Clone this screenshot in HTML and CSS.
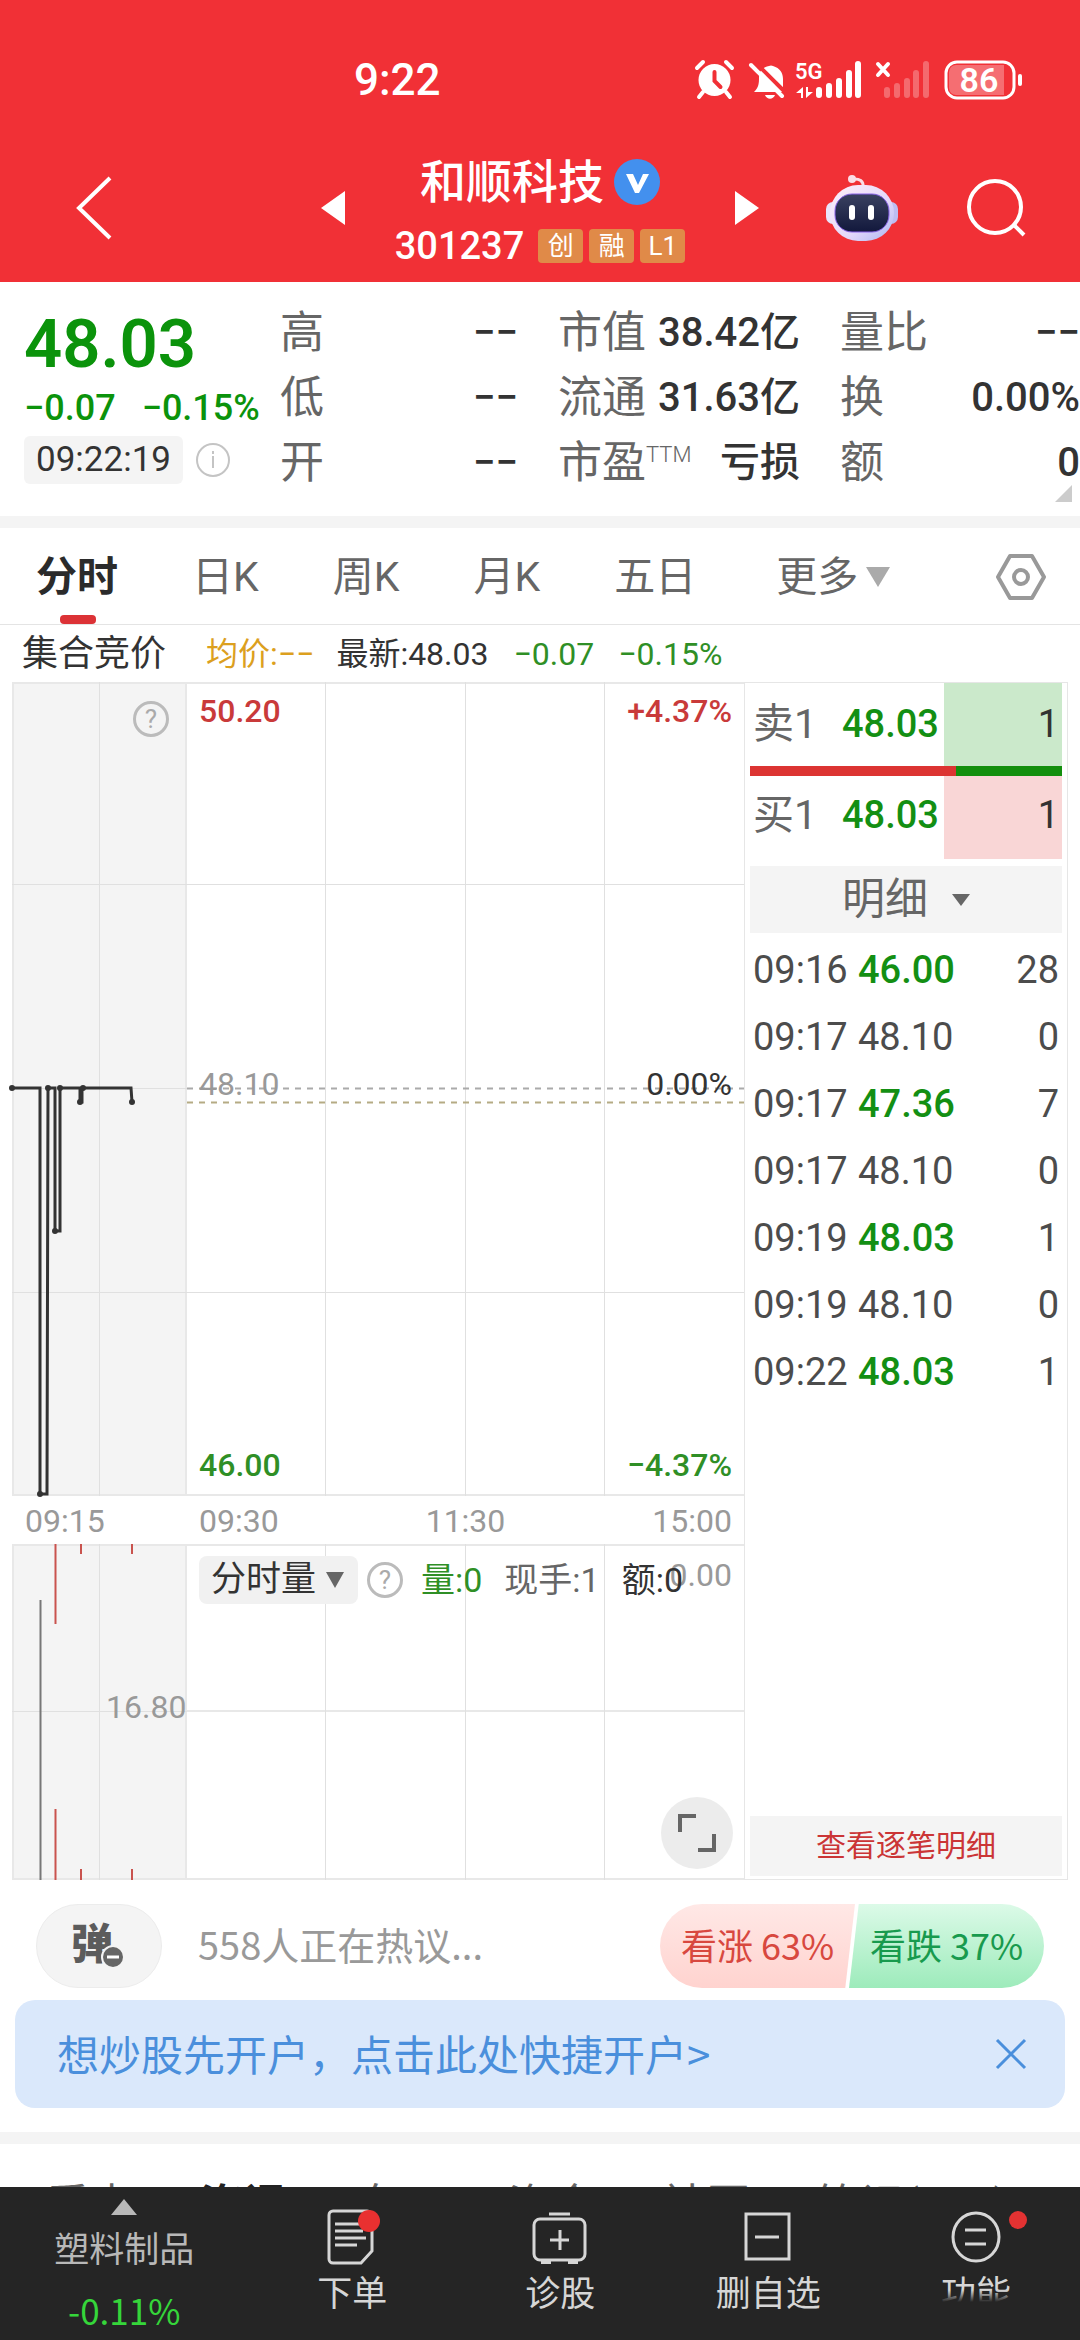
FILE: index.html
```html
<!DOCTYPE html>
<html lang="zh-CN">
<head>
<meta charset="utf-8">
<meta name="viewport" content="width=device-width, initial-scale=1">
<title>和顺科技 301237</title>
<link rel="stylesheet" href="styles.css">
</head>
<body>
<div class="app">
  <header class="top">
    <div class="status">
      <span class="clock">9:22</span>
      <svg class="status-icons" width="328" height="44" viewBox="0 0 328 44" aria-hidden="true">
        <g stroke="#fff" stroke-width="4" stroke-linecap="round" fill="none">
          <path d="M3 10l6-6M38 10l-6-6M9 34l-4 5M32 34l4 5"/>
          <circle cx="20.500" cy="22" r="16" fill="#fff" stroke="none"/>
          <path d="M20.500 14v9l6 6" stroke="#f13036"/>
        </g>
        <path d="M60 34c5-5 5-9 5-15 0-6 4-10 10-11a4 4 0 0 1 4 0c7 2 10 7 10 13v9l3 4z" fill="#fff"/>
        <path d="M71 37h10c-2 5-8 5-10 0z" fill="#fff"/>
        <path d="M60 3l32 32" stroke="#f13036" stroke-width="4"/>
        <path d="M57 7l31 31" stroke="#fff" stroke-width="4" stroke-linecap="round"/>
        <path d="M109 40V29l-7 6h5v5zM112 29v11l7-6h-5v-5z" fill="#fff"/>
        <g stroke="#fff" stroke-width="6" stroke-linecap="round">
          <path d="M125 32v5M135 28v9M145 23v14M155 15v22M164 6v31"/>
          <path d="M193 32v5M203 28v9M213 23v14M222 15v22M232 6v31" opacity=".28"/>
          <path d="M184 6l10 11M194 6l-10 11" stroke-width="4"/>
        </g>
        <rect x="252" y="4" width="68" height="36" rx="11" fill="none" stroke="#fff" stroke-width="3"/>
        <path d="M262 7h48v30h-48a7 7 0 0 1-7-7V14a7 7 0 0 1 7-7z" fill="#fff" opacity=".3"/>
        <rect x="324" y="16" width="4" height="12" rx="2" fill="#fff"/>
        <text class="net" x="101" y="21">5G</text>
        <text class="charge" x="285" y="34" text-anchor="middle">86</text>
      </svg>
    </div>
    <div class="titlebar">
      <button class="icon-btn back" aria-label="返回"><svg width="40" height="68" viewBox="0 0 40 68"><path d="M36 4L5 34l31 30" fill="none" stroke="#fff" stroke-width="4"/></svg></button>
      <button class="icon-btn" aria-label="上一只"><svg width="24" height="36" viewBox="0 0 24 36"><path d="M24 1v34L0 18z" fill="#fff"/></svg></button>
      <div class="stock">
        <h1 class="name">和顺科技 <svg width="46" height="46" viewBox="0 0 46 46" aria-hidden="true"><circle cx="23" cy="23" r="23" fill="#4390ee"/><path d="M12 15h7l5 11 5-11h6L25 34h-4z" fill="#fff"/></svg></h1>
        <p class="code">301237 <span class="tag">创</span><span class="tag">融</span><span class="tag">L1</span></p>
      </div>
      <button class="icon-btn" aria-label="下一只"><svg width="24" height="36" viewBox="0 0 24 36"><path d="M0 1v34l24-17z" fill="#fff"/></svg></button>
      <button class="icon-btn robot" aria-label="智能助手">
        <svg width="74" height="70" viewBox="0 0 74 70">
          <defs>
            <linearGradient id="shell" x1="0" y1="0" x2="1" y2="1"><stop offset="0" stop-color="#fff0fa"/><stop offset=".6" stop-color="#e4d8fa"/><stop offset="1" stop-color="#a9b6f2"/></linearGradient>
            <linearGradient id="face" x1="0" y1="0" x2="0" y2="1"><stop offset="0" stop-color="#3a4160"/><stop offset="1" stop-color="#12183c"/></linearGradient>
          </defs>
          <path d="M27 6q12-1 11 8" fill="none" stroke="#fbdde6" stroke-width="3"/>
          <circle cx="27" cy="6" r="4" fill="#fbdde6"/>
          <rect x="1" y="29" width="14" height="22" rx="7" fill="#e9e4fb"/>
          <rect x="59" y="29" width="14" height="22" rx="7" fill="#bdbdf2"/>
          <rect x="5" y="12" width="64" height="56" rx="28" fill="url(#shell)"/>
          <rect x="10" y="21" width="54" height="38" rx="17" fill="url(#face)" stroke="#8a63e8" stroke-width="1"/>
          <rect x="24" y="32" width="6" height="15" rx="3" fill="#fff"/>
          <rect x="43" y="32" width="6" height="15" rx="3" fill="#fff"/>
        </svg>
      </button>
      <button class="icon-btn" aria-label="搜索"><svg width="60" height="60" viewBox="0 0 60 60"><circle cx="29" cy="29" r="26" fill="none" stroke="#fff" stroke-width="4"/><path d="M48 47l10 10" stroke="#fff" stroke-width="4"/></svg></button>
    </div>
  </header>

  <main class="content">
    <section class="quote">
      <div class="last">
        <strong class="price">48.03</strong>
        <p class="change"><span>−0.07</span><span>−0.15%</span></p>
        <p class="when"><time>09:22:19</time><svg width="36" height="36" viewBox="0 0 36 36" aria-hidden="true"><circle cx="18" cy="18" r="16" fill="none" stroke="#c4c4c4" stroke-width="2"/><path d="M18 14v12M18 9v3" stroke="#c4c4c4" stroke-width="2"/></svg></p>
      </div>
      <dl class="stats">
        <div><dt>高</dt><dd>−−</dd></div>
        <div><dt>市值</dt><dd>38.42亿</dd></div>
        <div><dt>量比</dt><dd>−−</dd></div>
        <div><dt>低</dt><dd>−−</dd></div>
        <div><dt>流通</dt><dd>31.63亿</dd></div>
        <div><dt>换</dt><dd>0.00%</dd></div>
        <div><dt>开</dt><dd>−−</dd></div>
        <div><dt>市盈<sup>TTM</sup></dt><dd>亏损</dd></div>
        <div><dt>额</dt><dd>0</dd></div>
      </dl>
      <svg class="corner" width="17" height="17" viewBox="0 0 17 17" aria-hidden="true"><path d="M17 0v17H0z" fill="#ccc"/></svg>
    </section>

    <nav class="periods">
      <button class="period on">分时</button>
      <button class="period">日K</button>
      <button class="period">周K</button>
      <button class="period">月K</button>
      <button class="period">五日</button>
      <button class="period">更多<svg width="24" height="20" viewBox="0 0 24 20" aria-hidden="true"><path d="M0 0h24L12 20z" fill="#aaa"/></svg></button>
      <button class="icon-btn settings" aria-label="设置"><svg width="50" height="48" viewBox="0 0 50 48"><path d="M14 3h22l12 21-12 21H14L2 24z" fill="none" stroke="#999" stroke-width="4" stroke-linejoin="round"/><circle cx="25" cy="24" r="7" fill="none" stroke="#999" stroke-width="4"/></svg></button>
    </nav>

    <p class="ticker"><span class="auction">集合竞价</span><span class="avg">均价:−−</span><span class="now">最新:48.03</span><span class="down">−0.07</span><span class="down">−0.15%</span></p>

    <section class="board">
      <div class="charts">
        <div class="plot price-plot">
          <svg class="canvas" viewBox="0 0 732 814" preserveAspectRatio="none" aria-hidden="true">
            <rect width="175" height="814" fill="#f4f4f4"/>
            <path d="M0 1h732M0 813h732M1 0v814M174 0v814" stroke="#e8e8e8" stroke-width="2" fill="none"/>
            <path d="M0 202.500h732M0 406.500h175M0 610.500h732M87.500 0v814M313.500 0v814M453.500 0v814M592.500 0v814" stroke="#e0e0e0" stroke-width="1"/>
            <path d="M175 406.500h557" stroke="#aaa" stroke-width="2" stroke-dasharray="6 6"/>
            <path d="M175 420.500h557" stroke="#b5ab84" stroke-width="2" stroke-dasharray="6 6"/>
          </svg>
          <svg class="canvas line" viewBox="0 0 732 814" preserveAspectRatio="none" aria-hidden="true">
            <path d="M0 406h28v406h7L36 406h7v143h5V406h20v14h2V406h49l1 14" fill="none" stroke="#333" stroke-width="3"/>
            <g fill="#333"><circle cx="0" cy="406" r="3"/><circle cx="36" cy="406" r="3"/><circle cx="48" cy="406" r="3"/><circle cx="71" cy="406" r="3"/><circle cx="28" cy="812" r="3"/><circle cx="43" cy="549" r="3"/><circle cx="68" cy="420" r="3"/><circle cx="120" cy="420" r="3"/></g>
          </svg>
          <button class="icon-btn help help-price" aria-label="说明">?</button>
          <div class="scale high up"><span>50.20</span><span>+4.37%</span></div>
          <div class="scale mid"><span class="muted">48.10</span><span>0.00%</span></div>
          <div class="scale low down"><span>46.00</span><span>−4.37%</span></div>
        </div>
        <div class="axis"><span>09:15</span><span>09:30</span><span>11:30</span><span>15:00</span></div>
        <div class="plot volume-plot">
          <svg class="canvas" viewBox="0 0 732 336" preserveAspectRatio="none" aria-hidden="true">
            <rect width="175" height="336" fill="#f4f4f4"/>
            <path d="M0 1h732M0 335h732M1 0v336M174 0v336M175 167h557" stroke="#e8e8e8" stroke-width="2" fill="none"/>
            <path d="M0 167.500h175M87.500 0v336M313.500 0v336M453.500 0v336M592.500 0v336" stroke="#e0e0e0" stroke-width="1"/>
            <path d="M28.500 56v280" stroke="#777" stroke-width="2"/>
            <path d="M43.500 0v80M43.500 265v71M69 0v10M69 325v11M120 0v10M120 325v11" stroke="#c9534e" stroke-width="2"/>
          </svg>
          <span class="vol-mid">16.80</span>
          <span class="vol-max">0.00</span>
          <div class="vol-head">
            <button class="metric">分时量<svg width="18" height="18" viewBox="0 0 18 18" aria-hidden="true"><path d="M0 1h18L9 17z" fill="#666"/></svg></button>
            <button class="icon-btn help" aria-label="说明">?</button>
            <span class="down">量:0</span><span class="hand">现手:1</span><span>额:0</span>
          </div>
          <button class="icon-btn expand" aria-label="全屏"><svg width="38" height="38" viewBox="0 0 38 38"><path d="M2 18V2h16M36 20v16H20" fill="none" stroke="#666" stroke-width="4"/></svg></button>
        </div>
      </div>

      <aside class="book">
        <div class="order"><span class="side">卖1</span><span class="bid">48.03</span><span class="qty sell">1</span></div>
        <div class="ratio"><span class="ratio-buy"></span></div>
        <div class="order"><span class="side">买1</span><span class="bid">48.03</span><span class="qty buy">1</span></div>
        <button class="detail">明细<svg width="18" height="12" viewBox="0 0 18 12" aria-hidden="true"><path d="M0 0h18L9 12z" fill="#666"/></svg></button>
        <table class="trades">
          <tbody>
            <tr><td>09:16</td><td class="fell">46.00</td><td>28</td></tr>
            <tr><td>09:17</td><td>48.10</td><td>0</td></tr>
            <tr><td>09:17</td><td class="fell">47.36</td><td>7</td></tr>
            <tr><td>09:17</td><td>48.10</td><td>0</td></tr>
            <tr><td>09:19</td><td class="fell">48.03</td><td>1</td></tr>
            <tr><td>09:19</td><td>48.10</td><td>0</td></tr>
            <tr><td>09:22</td><td class="fell">48.03</td><td>1</td></tr>
          </tbody>
        </table>
        <a class="more" href="#">查看逐笔明细</a>
      </aside>
    </section>

    <section class="talk">
      <button class="danmu" aria-label="弹幕"><span class="danmu-mark">弹<svg width="24" height="24" viewBox="0 0 24 24" aria-hidden="true"><circle cx="12" cy="12" r="12" fill="#f4f4f4"/><circle cx="12" cy="12" r="10" fill="#666"/><path d="M6 12h12" stroke="#fff" stroke-width="3"/></svg></span></button>
      <a class="hot" href="#">558人正在热议...</a>
      <div class="vote"><button class="vote-up">看涨 63%</button><button class="vote-down">看跌 37%</button></div>
    </section>

    <aside class="promo">
      <a href="#">想炒股先开户，点击此处快捷开户&gt;</a>
      <button class="icon-btn" aria-label="关闭"><svg width="32" height="32" viewBox="0 0 32 32"><path d="M2 2l28 28M30 2L2 30" stroke="#4a8fdc" stroke-width="3"/></svg></button>
    </aside>

    <nav class="sections">
      <a href="#">看点</a><a class="on" href="#">资讯</a><a href="#">盘口</a><a href="#">资金</a><a href="#">社区</a><a href="#">笔记(99+)</a>
    </nav>
  </main>

  <nav class="dock">
    <button class="sector">
      <svg width="26" height="16" viewBox="0 0 26 16" aria-hidden="true"><path d="M13 0l13 16H0z" fill="#b8b8b8"/></svg>
      <span>塑料制品</span><span class="gain">-0.11%</span>
    </button>
    <button class="item">
      <svg width="60" height="60" viewBox="0 0 60 60" aria-hidden="true"><g fill="none" stroke="#d6d6d6" stroke-width="3"><path d="M11 4h34a5 5 0 0 1 5 5v35L39 56H11a4 4 0 0 1-4-4V8a4 4 0 0 1 4-4z"/><path d="M13 17h24M13 24h28M13 31h31M13 38h22"/></g><circle cx="47" cy="14" r="11" fill="#e93030"/></svg>
      <span>下单</span>
    </button>
    <button class="item">
      <svg width="60" height="60" viewBox="0 0 60 60" aria-hidden="true"><g fill="none" stroke="#d6d6d6" stroke-width="3"><rect x="4" y="12" width="51" height="41" rx="6"/><path d="M19 7h21M30 23v20M20 33h19"/><path d="M11 55h10M38 55h10" stroke-width="4"/></g></svg>
      <span>诊股</span>
    </button>
    <button class="item">
      <svg width="60" height="60" viewBox="0 0 60 60" aria-hidden="true"><g fill="none" stroke="#d6d6d6" stroke-width="3"><path d="M8 7h43v45H8zM17 30h24"/></g></svg>
      <span>删自选</span>
    </button>
    <button class="item last-item">
      <svg width="60" height="60" viewBox="0 0 60 60" aria-hidden="true"><g fill="none" stroke="#d6d6d6" stroke-width="3"><ellipse cx="30" cy="30" rx="23" ry="24"/><path d="M19 23h21M19 37h21"/></g></svg>
      <i class="dot"></i>
      <span>功能</span>
    </button>
  </nav>
</div>
</body>
</html>
```
FILE: styles.css
```css
* { box-sizing: border-box; margin: 0; padding: 0; }
html, body { height: 100%; }
body { font-family: Roboto, "Noto Sans CJK SC", sans-serif; background: #fff; color: #333; }
button { border: 0; background: none; font: inherit; color: inherit; cursor: pointer; }
a { color: inherit; text-decoration: none; }
svg { display: block; flex: none; }
.app { display: flex; flex-direction: column; height: 100vh; overflow: hidden; }
.icon-btn { display: flex; align-items: center; justify-content: center; flex: none; }
.down { color: #2f8f26; }
.up { color: #c93a3a; }

/* header */
.top { flex: none; background: #f13036; color: #fff; padding: 50px 0 16px; }
.status { display: flex; align-items: center; justify-content: space-between; padding: 0 58px 0 354px; height: 60px; }
.clock { font-size: 44px; font-weight: 500; line-height: 60px; }
.net { font-size: 22px; font-weight: 600; fill: #fff; }
.charge { font-size: 34px; font-weight: 600; fill: #fff; }
.titlebar { display: flex; align-items: center; height: 156px; padding: 40px 54px 0 74px; }
.titlebar .back { margin-right: auto; }
.stock { width: 390px; display: flex; flex-direction: column; align-items: center; padding-top: 4px; }
.name { display: flex; align-items: center; gap: 10px; font-size: 46px; font-weight: 500; line-height: 60px; }
.code { display: flex; align-items: center; gap: 6px; font-size: 38px; line-height: 44px; margin-top: 12px; font-weight: 500; }
.tag { background: #e08a48; color: #fff; font-size: 26px; font-weight: 400; line-height: 34px; width: 45px; text-align: center; border-radius: 4px; }
.tag:first-child { margin-left: 8px; }
.robot { margin-left: 66px; margin-right: 67px; }

/* quote */
.content { flex: 1; min-height: 0; overflow: hidden; }
.quote { position: relative; display: flex; height: 246px; padding: 18px 0 0 24px; border-bottom: 12px solid #f4f4f4; }
.last { flex: none; width: 256px; padding-top: 14px; color: #0b930b; white-space: nowrap; }
.price { display: block; font-size: 67px; line-height: 60px; font-weight: 600; }
.change { display: flex; gap: 26px; font-size: 36px; line-height: 40px; margin-top: 14px; font-weight: 500; }
.when { display: flex; align-items: center; gap: 12px; margin-top: 8px; }
.when time { background: #f4f4f4; color: #333; font-size: 35px; line-height: 48px; padding: 0 12px; border-radius: 6px; }
.stats { flex: 1; display: grid; grid-template-columns: 238fr 242fr 240fr; grid-auto-rows: 65px; column-gap: 40px; }
.stats div { display: flex; justify-content: space-between; align-items: center; line-height: 60px; white-space: nowrap; }
.stats dt { font-size: 44px; color: #666; font-weight: 400; }
.stats dd { font-size: 40px; font-weight: 500; }
.stats sup { font-size: 22px; line-height: 20px; font-weight: 300; }
.corner { position: absolute; right: 8px; bottom: 14px; }

/* period tabs */
.periods { display: flex; align-items: center; gap: 74px; height: 97px; padding: 2px 34px 0 36px; border-bottom: 1px solid #e4e4e4; font-size: 41px; color: #666; }
.period { position: relative; display: flex; align-items: center; gap: 8px; line-height: 94px; }
.period:nth-child(6) { margin-left: 6px; }
.period.on { color: #2b2b2b; font-weight: 700; }
.period.on::after { content: ""; position: absolute; left: 24px; right: 22px; bottom: 0; height: 9px; border-radius: 4px; background: #dc3236; }
.settings { margin-left: auto; }
.ticker { display: flex; align-items: center; height: 57px; padding: 0 22px; font-size: 32px; line-height: 56px; white-space: nowrap; }
.auction { font-size: 36px; margin-right: 40px; }
.avg { color: #dca01e; margin-right: 22px; }
.now { margin-right: 25px; }
.ticker .down { margin-right: 24px; }

/* charts */
.board { display: grid; grid-template-columns: 744fr 336fr; }
.charts { padding-left: 12px; font-size: 32px; }
.plot { position: relative; }
.price-plot { height: 814px; }
.volume-plot { height: 336px; }
.canvas { position: absolute; inset: 0; width: 100%; height: 100%; }
.line { overflow: visible; }
.scale { position: absolute; left: 187px; right: 12px; display: flex; justify-content: space-between; line-height: 40px; font-weight: 500; }
.scale.mid { font-weight: 400; }
.high { top: 9px; }
.mid { top: 382px; }
.low { bottom: 11px; }
.muted { color: #999; }
.help { width: 36px; height: 36px; border: 3px solid #bbb; border-radius: 50%; color: #aaa; font-size: 26px; line-height: 30px; }
.help-price { position: absolute; left: 121px; top: 19px; }
.axis { display: grid; grid-template-columns: 174px 1fr 1fr 1fr; padding: 0 12px 0 13px; height: 48px; line-height: 50px; color: #999; }
.axis span:nth-child(3) { text-align: center; }
.axis span:nth-child(4) { text-align: right; }
.vol-head { position: absolute; left: 187px; top: 12px; display: flex; align-items: center; font-size: 34px; line-height: 48px; white-space: nowrap; }
.metric { display: flex; align-items: center; gap: 10px; padding: 0 14px 0 12px; background: #f1f1f1; border-radius: 8px; font-size: 35px; line-height: 48px; }
.vol-head .help { margin: 0 18px 0 9px; }
.vol-head span { margin-right: 22px; }
.hand { color: #666; }
.vol-mid, .vol-max { position: absolute; color: #999; line-height: 40px; }
.vol-mid { left: 94px; top: 143px; }
.vol-max { right: 12px; top: 11px; }
.expand { position: absolute; right: 11px; bottom: 11px; width: 72px; height: 72px; border-radius: 50%; background: #ececec; }

/* order book */
.book { display: flex; flex-direction: column; margin-right: 12px; padding: 0 5px 3px; border: 1px solid #e6e6e6; font-size: 38px; }
.order { display: grid; grid-template-columns: 92px 102px 1fr; height: 83px; line-height: 83px; }
.ratio + .order { line-height: 78px; }
.side { padding-left: 3px; color: #666; font-size: 41px; }
.bid { color: #138f13; font-weight: 500; }
.qty { text-align: right; padding-right: 3px; }
.sell { background: #cbe9cb; }
.buy { background: #f9d6d6; }
.ratio { height: 10px; background: #138f0d; }
.ratio-buy { display: block; width: 66%; height: 10px; background: #dc3432; }
.detail { display: flex; align-items: center; justify-content: center; gap: 24px; margin-top: 7px; background: #f4f4f4; color: #666; font-size: 43px; line-height: 67px; }
.trades { border-collapse: collapse; width: 100%; margin-top: 3px; color: #4c4c4c; }
.trades td { height: 67px; line-height: 60px; padding: 0 3px; }
.trades td:first-child { width: 105px; }
.trades td:last-child { text-align: right; }
.trades .fell { color: #138f13; font-weight: 500; }
.more { margin-top: auto; background: #f4f4f4; color: #cb3536; font-size: 30px; line-height: 60px; text-align: center; }

/* discussion */
.talk { display: flex; align-items: center; padding: 24px 36px 12px; font-family: "Noto Sans CJK SC", sans-serif; }
.danmu { width: 126px; height: 84px; border-radius: 42px; background: #f4f4f4; border: 1px solid #ececec; display: flex; justify-content: center; align-items: center; }
.danmu-mark { position: relative; font-size: 42px; font-weight: 900; line-height: 60px; color: #5c5c5c; margin: 0 14px 10px 0; }
.danmu-mark svg { position: absolute; right: -12px; bottom: 2px; }
.hot { flex: 1; margin-left: 36px; font-size: 38px; line-height: 60px; padding-bottom: 4px; color: #999; }
.vote { display: flex; width: 384px; height: 84px; border-radius: 42px; overflow: hidden; font-size: 36px; white-space: nowrap; }
.vote button { flex: 1; padding-bottom: 4px; }
.vote-up { background: linear-gradient(#ffe8e6, #ffd3cf); color: #d8483f; clip-path: polygon(0 0, 100% 0, 95% 100%, 0 100%); }
.vote-down { background: linear-gradient(#dcfae8, #9debbb); color: #189a4e; margin-left: -6px; clip-path: polygon(5% 0, 100% 0, 100% 100%, 0 100%); }
.promo { display: flex; align-items: center; justify-content: space-between; margin: 0 15px; padding: 0 38px 0 42px; height: 108px; border-radius: 20px; background: #dae8fb; color: #4a8fdc; font: 42px/60px "Noto Sans CJK SC", sans-serif; }
.promo a { padding-bottom: 2px; }
.sections { display: flex; gap: 66px; margin-top: 24px; padding: 32px 46px 0; border-top: 12px solid #f4f4f4; font-size: 44px; line-height: 60px; color: #666; white-space: nowrap; }
.sections .on { color: #222; font-weight: 700; }

/* bottom dock */
.dock { flex: none; display: flex; height: 153px; background: #252525; color: #d6d6d6; font: 35px/48px "Noto Sans CJK SC", sans-serif; }
.sector { width: 23%; display: flex; flex-direction: column; align-items: center; padding-top: 12px; color: #b8b8b8; }
.sector span { line-height: 63px; }
.sector .gain { color: #35d63a; }
.item { position: relative; flex: 1; display: flex; flex-direction: column; align-items: center; padding-top: 20px; }
.dot { position: absolute; right: 53px; top: 24px; width: 18px; height: 18px; border-radius: 50%; background: #e33232; }
.last-item::after { content: ""; position: absolute; left: 0; right: 0; bottom: 0; height: 50px; background: linear-gradient(rgba(37,37,37,0), #252525 12px); }
```
